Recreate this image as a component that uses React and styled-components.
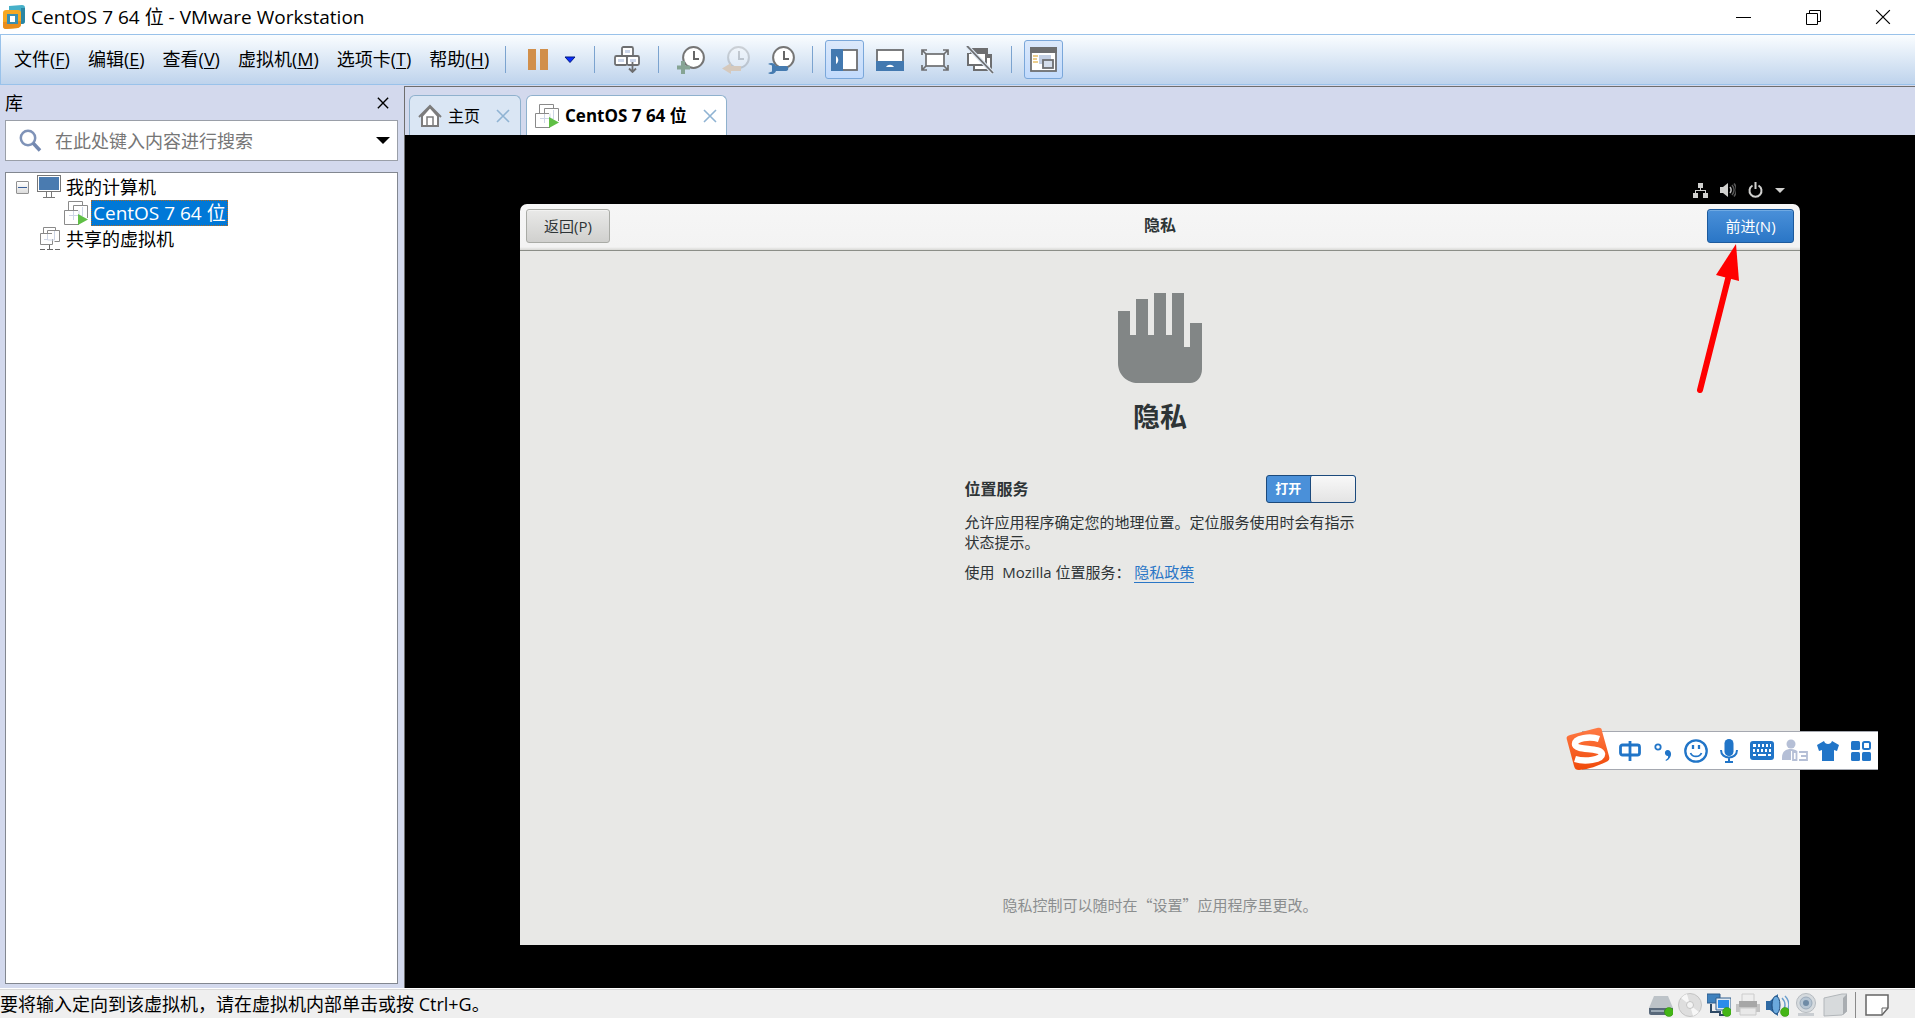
import React, { useState } from "react";
import styled, { createGlobalStyle, css } from "styled-components";

const host = `"Open Sans", "Noto Sans CJK SC", sans-serif`;
const guest = `"Open Sans", "Noto Sans CJK SC", sans-serif`;

const GlobalStyle = createGlobalStyle`
  *, *::before, *::after { box-sizing: border-box; }
  html, body, #root { height: 100%; }
  body { margin: 0; overflow: hidden; font-family: ${host}; font-size: 18px; color: #000; }
  button, input { font: inherit; color: inherit; }
  ul, h1, h2, p { margin: 0; padding: 0; font-weight: inherit; font-size: inherit; }
  svg { display: block; flex: none; }
`;

const plainButton = css`
  display: flex;
  align-items: center;
  justify-content: center;
  padding: 0;
  border: 0;
  background: none;
  white-space: nowrap;
`;

const Page = styled.div`
  display: flex;
  flex-direction: column;
  height: 100vh;
  background: #d3d9ed;
`;

/* ---------- title bar ---------- */
const TitleBar = styled.header`
  display: flex;
  align-items: center;
  flex: none;
  height: 34px;
  padding-left: 3px;
  gap: 6px;
  background: #fff;
`;
const WindowTitle = styled.h1`
  flex: 1;
  font-size: 19px;
  line-height: 34px;
`;
const WindowControls = styled.div`
  display: flex;
  margin-right: -3px;
`;
const WindowButton = styled.button`
  ${plainButton}
  width: 70px;
  height: 34px;
`;

/* ---------- menu and tool bar ---------- */
const Toolbar = styled.div`
  display: flex;
  align-items: center;
  flex: none;
  height: 51px;
  border: 1px solid #99c2ea;
  border-right: 0;
  background: linear-gradient(#fafdff, #bed3ec);
`;
const Menus = styled.nav`
  display: flex;
  gap: 18px;
  width: 504px;
  padding: 0 0 2px 13px;
`;
const MenuButton = styled.button`
  ${plainButton}
  line-height: 26px;
  u { text-underline-offset: 2px; text-decoration-thickness: 1px; }
`;
const Divider = styled.span`
  flex: none;
  width: 1px;
  height: 27px;
  background: #7ba3cf;
`;
const ToolGroup = styled.div`
  display: flex;
  align-items: center;
  gap: ${(p) => p.$gap || 6}px;
  padding: 0 ${(p) => p.$right || 12}px 0 ${(p) => p.$left || 12}px;
`;
const ToolButton = styled.button`
  ${plainButton}
  width: ${(p) => p.$width || 39}px;
  height: 39px;
  border: 1px solid ${(p) => (p.$active ? "#7aa7da" : "transparent")};
  border-radius: 3px;
  background: ${(p) => (p.$active ? "linear-gradient(#dce9fb, #c1dafc)" : "none")};
`;

/* ---------- body ---------- */
const Body = styled.div`
  display: flex;
  flex: 1;
  min-height: 0;
`;
const Sidebar = styled.aside`
  display: flex;
  flex-direction: column;
  flex: none;
  width: 404px;
  padding: 0 6px 4px 5px;
`;
const SidebarHeader = styled.div`
  display: flex;
  align-items: center;
  justify-content: space-between;
  height: 35px;
  padding-right: 9px;
  line-height: 34px;
`;
const SmallButton = styled.button`
  ${plainButton}
  width: ${(p) => p.$size || 12}px;
  height: ${(p) => p.$size || 12}px;
`;
const SearchBox = styled.form`
  display: flex;
  align-items: center;
  height: 41px;
  padding: 0 7px 0 13px;
  gap: 13px;
  border: 1px solid #9a9fa8;
  background: #fff;
`;
const SearchInput = styled.input`
  flex: 1;
  min-width: 0;
  height: 30px;
  padding: 0;
  border: 0;
  outline: 0;
  background: transparent;
  &::placeholder { color: #767676; opacity: 1; }
`;
const Tree = styled.ul`
  flex: 1;
  margin-top: 11px;
  padding: 1px 0;
  border: 1px solid #828790;
  background: #fff;
  list-style: none;
`;
const TreeRow = styled.li`
  display: flex;
  align-items: center;
  height: 26px;
  padding-left: ${(p) => p.$indent}px;
  gap: ${(p) => p.$gap}px;
`;
const TreeLabel = styled.span`
  line-height: 26px;
  ${(p) => p.$selected && css`
    height: 26px;
    padding: 0 1px;
    border: 1px dotted #b36a20;
    background: #0078d7;
    color: #fff;
    font-size: 19px;
    line-height: 24px;
  `}
`;
const Expander = styled.button`
  ${plainButton}
  width: 13px;
  height: 13px;
  margin-right: 3px;
  border: 1px solid #919191;
  border-radius: 1px;
  background: linear-gradient(#fff, #dcdcdc);
`;

const Workspace = styled.main`
  display: flex;
  flex: 1;
  flex-direction: column;
  min-width: 0;
  margin-top: 1px;
  border-top: 1px solid #6e6e6e;
  border-left: 1px solid #6e6e6e;
`;
const Tabs = styled.div`
  display: flex;
  align-items: flex-end;
  flex: none;
  gap: 5px;
  height: 48px;
  padding-left: 4px;
`;
const Tab = styled.div`
  display: flex;
  align-items: center;
  height: 40px;
  padding: 0 ${(p) => (p.$active ? 9 : 10)}px 0 8px;
  border: 1px solid #8fb1cd;
  border-bottom: 0;
  border-radius: 6px 6px 0 0;
  background: ${(p) => (p.$active ? "#fff" : "#dae6f4")};
`;
const TabButton = styled.button`
  ${plainButton}
  gap: 6px;
  margin-right: 16px;
  font-size: ${(p) => (p.$active ? 17 : 16)}px;
  line-height: 24px;
  font-weight: ${(p) => (p.$active ? 700 : 400)};
`;
const Console = styled.div`
  display: flex;
  flex: 1;
  align-items: center;
  justify-content: center;
  padding-bottom: 2px;
  background: #000;
`;

/* ---------- guest desktop ---------- */
const Guest = styled.section`
  position: relative;
  display: flex;
  flex-direction: column;
  width: 1280px;
  max-width: 100%;
  height: 768px;
  font-family: ${guest};
  font-size: 15px;
  color: #2e3436;
`;
const GuestStatus = styled.div`
  display: flex;
  align-items: center;
  justify-content: flex-end;
  gap: 12px;
  height: 27px;
  padding-right: 15px;
`;
const HeaderBar = styled.div`
  display: grid;
  grid-template-columns: 1fr auto 1fr;
  align-items: center;
  height: 47px;
  padding: 0 6px 1px;
  border-bottom: 1px solid #8b8e88;
  border-radius: 7px 7px 0 0;
  background: linear-gradient(#f6f6f6 0, #f3f3f3 43px, #d8d8d5 46px);
`;
const HeaderTitle = styled.h2`
  font-size: 16px;
  font-weight: 700;
  line-height: 24px;
  padding-bottom: 2px;
`;
const PushButton = styled.button`
  ${plainButton}
  justify-self: ${(p) => (p.$primary ? "end" : "start")};
  width: ${(p) => (p.$primary ? 87 : 84)}px;
  height: 34px;
  padding-bottom: 2px;
  border: 1px solid ${(p) => (p.$primary ? "#1c5a9d" : "#a9aba6")};
  border-radius: 3px;
  background: ${(p) => (p.$primary ? "linear-gradient(#4a90d9, #2a76c6)" : "linear-gradient(#e9e9e8, #d0d0ce)")};
  box-shadow: inset 0 1px ${(p) => (p.$primary ? "#6fa9e2" : "#f2f2f1")};
  color: ${(p) => (p.$primary ? "#fff" : "#2e3436")};
`;
const Assistant = styled.div`
  display: flex;
  flex: 1;
  flex-direction: column;
  align-items: center;
  padding: 42px 0 30px;
  background: #e8e8e6;
`;
const PageHeading = styled.h2`
  margin-top: 14px;
  font-size: 27px;
  font-weight: 700;
  line-height: 40px;
`;
const Settings = styled.div`
  display: flex;
  flex-direction: column;
  width: 391px;
  margin-top: 39px;
`;
const SettingRow = styled.div`
  display: flex;
  align-items: center;
  justify-content: space-between;
  height: 27px;
`;
const SettingName = styled.label`
  padding-bottom: 2px;
  font-size: 16px;
  font-weight: 700;
`;
const Switch = styled.span`
  position: relative;
  display: flex;
  width: 90px;
  height: 28px;
  overflow: hidden;
  border: 1px solid #1c4a7c;
  border-radius: 3px;
  background: #4a90d9;
`;
const SwitchInput = styled.input`
  position: absolute;
  inset: 0;
  width: 100%;
  height: 100%;
  margin: 0;
  opacity: 0;
`;
const SwitchText = styled.span`
  flex: 1;
  font-size: 13px;
  font-weight: 700;
  line-height: 25px;
  text-align: center;
  color: #fff;
`;
const SwitchKnob = styled.span`
  flex: 1;
  border-left: 1px solid #1c4a7c;
  border-radius: 2px;
  background: linear-gradient(#f8f8f8, #e4e4e4);
`;
const Paragraph = styled.p`
  margin-top: ${(p) => p.$top}px;
  line-height: 20px;
`;
const PolicyLink = styled.a`
  border-bottom: 1px solid #2a76c6;
  color: #2a76c6;
  text-decoration: none;
`;
const Footnote = styled.p`
  margin-top: auto;
  font-family: "Noto Sans CJK SC", sans-serif;
  line-height: 20px;
  color: #8b8e8f;
`;
const Pointer = styled.svg`
  position: absolute;
  top: 66px;
  right: 58px;
  pointer-events: none;
`;

/* ---------- input method bar ---------- */
const ImeBar = styled.div`
  position: fixed;
  right: 37px;
  bottom: 248px;
  display: flex;
  align-items: center;
  height: 39px;
  padding-right: 1px;
  border: solid #a5a8b0;
  border-width: 1px 0;
  background: #fff;
`;
const ImeLogo = styled.span`
  margin: 0 2px 3px -17px;
`;
const ImeButton = styled.button`
  ${plainButton}
  width: 33px;
  height: 37px;
`;

/* ---------- status bar ---------- */
const StatusBar = styled.footer`
  display: flex;
  align-items: center;
  justify-content: space-between;
  flex: none;
  height: 30px;
  padding: 2px 26px 0 0;
  border-top: 1px solid #fff;
  background: #efefef;
  box-shadow: inset 0 1px #d9d9d9;
`;
const StatusText = styled.span`
  line-height: 27px;
`;
const Devices = styled.div`
  display: flex;
  align-items: center;
  gap: 5px;
  padding-top: 1px;
`;
const DeviceButton = styled.button`
  ${plainButton}
  width: 24px;
  height: 24px;
`;
const DeviceDivider = styled.span`
  width: 1px;
  height: 26px;
  margin: 0 4px 0 3px;
  background: #8a8a8a;
`;

/* ---------- drawings ---------- */
const AppLogo = () => (
  <svg width="22" height="24" viewBox="0 0 22 24">
    <path d="M6 1 19 0c2 0 3 1 3 3v13c0 2-1 3-3 3H6Z" fill="#46b0c9" />
    <path d="M18 3h4v13c0 2-1 3-3 3h-1Z" fill="#2b86a4" />
    <path d="M3 5h12c2 0 3 1 3 3v11c0 2-1 3-3 4L3 24c-2 0-3-1-3-3V8c0-2 1-3 3-3Z" fill="#f6a821" />
    <path d="M0 17v4c0 2 1 3 3 3l12-1c2-1 3-2 3-4v-3Z" fill="#ea8d1b" />
    <path d="M4 9h11v10H4Z" fill="#3a8fb0" />
    <path d="M7 11h5v6H7Z" fill="#fff" />
  </svg>
);

const Cross = ({ size = 12, color = "#000", weight = 1.6 }) => (
  <svg width={size} height={size} viewBox="0 0 14 14" fill="none" stroke={color} strokeWidth={weight}>
    <path d="m1 1 12 12M13 1 1 13" />
  </svg>
);

const PauseIcon = () => (
  <svg width="20" height="21" viewBox="0 0 20 21" fill="#d18f4b">
    <path d="M0 0h8v21H0zM12 0h8v21h-8z" />
  </svg>
);
const BlueCaret = () => (
  <svg width="12" height="8" viewBox="0 0 12 8">
    <path d="M1 1h10L6 6.500Z" fill="#0a2cff" stroke="#001a80" />
  </svg>
);
const SendKeysIcon = () => (
  <svg width="26" height="27" viewBox="0 0 26 27" fill="#fff" stroke="#6d6e70" strokeWidth="1.800">
    <rect x="8" y="1" width="11" height="9" rx="1.500" />
    <rect x="1" y="10" width="12" height="9" rx="1.500" />
    <rect x="13" y="10" width="12" height="9" rx="1.500" />
    <path d="M11 4h5v3h-5zM4 13h6v3H4zM16 13h6v3h-6z" fill="#ccd6ea" stroke="none" />
    <path d="M18.500 16v9M15 22.500l3.500 3.500 3.500-3.500" fill="none" />
  </svg>
);
const Clock = ({ opacity = 1 }) => (
  <g opacity={opacity}>
    <circle cx="16.500" cy="11.500" r="10.400" fill="#fff" stroke="#757575" strokeWidth="2" />
    <path d="M17 5v8h5" fill="none" stroke="#666" strokeWidth="2" />
  </g>
);
const SnapshotIcon = () => (
  <svg width="28" height="28" viewBox="0 0 28 28">
    <Clock />
    <path d="M4 15h4v4.500h5v4H8V28H4v-4.500H0v-4h4Z" fill="#86a494" />
  </svg>
);
const RevertIcon = () => (
  <svg width="28" height="28" viewBox="0 0 28 28">
    <Clock opacity={0.27} />
    <path d="M0 22.500 9 17v3h10v5H9v3Z" fill="#d5c9bd" />
  </svg>
);
const ManageIcon = () => (
  <svg width="28" height="28" viewBox="0 0 28 28">
    <Clock />
    <path d="M1 18c3-2 7-1 8 2h10c3 0 3 5 0 5H9c-1 3-5 4-8 2l4-1.500v-6Z" fill="#457bb0" />
  </svg>
);
const LibraryIcon = () => (
  <svg width="27" height="22" viewBox="0 0 27 22">
    <rect x="1" y="1" width="25" height="20" fill="#fff" stroke="#6d6e70" strokeWidth="1.800" />
    <path d="M0 0h12v22H0z" fill="#4379b0" />
    <path d="M5 7c3 2 3 6 0 8Z" fill="#fff" />
  </svg>
);
const ThumbnailIcon = () => (
  <svg width="28" height="22" viewBox="0 0 28 22">
    <rect x="1" y="1" width="26" height="20" fill="#fff" stroke="#6d6e70" strokeWidth="1.800" />
    <path d="M0 12h28v10H0z" fill="#4379b0" />
    <path d="M10 18c2-3 6-3 8 0Z" fill="#fff" />
  </svg>
);
const FullscreenIcon = () => (
  <svg width="28" height="22" viewBox="0 0 28 22" fill="none" stroke="#6d6e70" strokeWidth="1.700">
    <rect x="5" y="5" width="18" height="12" fill="#fff" />
    <path d="M5 5 1 1m0 5V1h5M23 5l4-4m-5 0h5v5M5 17l-4 4m0-5v5h5M23 17l4 4m0-5v5h-5" />
  </svg>
);
const UnityIcon = () => (
  <svg width="28" height="28" viewBox="0 0 28 28">
    <path d="M4 2h18v6h4v17H7v-5H1V7h3Z" fill="#6d6e70" />
    <path d="M3 8h16v10H3Z" fill="#fff" />
    <path d="M9 20h12v-8h3v11H9Z" fill="#fff" />
    <path d="m1 0 26 27" stroke="#dce6f2" strokeWidth="4" />
    <path d="m1 0 26 27" stroke="#6d6e70" strokeWidth="1.800" />
  </svg>
);
const ConsoleIcon = () => (
  <svg width="27" height="25" viewBox="0 0 27 25">
    <rect x="1" y="1" width="25" height="23" fill="#fff" stroke="#6d6e70" strokeWidth="1.800" />
    <path d="M0 0h27v6H0z" fill="#6d6e70" />
    <path d="M3 9h5M3 12h4M3 15h5" stroke="#e5bd68" strokeWidth="1.600" />
    <path d="M9 8h12v9H9z" fill="#c3cfe3" />
    <rect x="13" y="13" width="10" height="8" fill="#d5deec" stroke="#6d6e70" strokeWidth="1.800" />
  </svg>
);
const SearchIcon = () => (
  <svg width="23" height="23" viewBox="0 0 23 23" fill="none">
    <circle cx="9" cy="9" r="7.200" stroke="#7f93b8" strokeWidth="2.500" />
    <path d="m14 14 7 7.500" stroke="#7388b0" strokeWidth="3.500" />
  </svg>
);
const MonitorIcon = () => (
  <svg width="24" height="24" viewBox="0 0 24 24" fill="none" stroke="#777">
    <rect x="0.500" y="0.500" width="23" height="16" fill="#fff" />
    <path d="M2 2h20v13H2z" fill="#4a7bb0" stroke="none" />
    <path d="M9.500 17v5.500M14.500 17v5.500M6 22.500h12" />
  </svg>
);
const MachineIcon = () => (
  <svg width="24" height="24" viewBox="0 0 24 24" fill="none" stroke="#8a8a8a">
    <path d="M4.500 9V.5h14v4M9.500 9V4.500h14V17M14 9.500H.5v14H15" />
    <path d="M9.500 10v9M5 14.500h10v-5M18.500 6v9H14" stroke="#cdd5e6" />
    <path d="M14 13v11l10-5.500Z" fill="#5fbf45" stroke="none" />
  </svg>
);
const SharedIcon = () => (
  <svg width="20" height="24" viewBox="0 0 20 24" fill="none" stroke="#8a8a8a">
    <path d="M3.500 6V.5h12v3M7.500 6V3.500h12v11h-5M12 6.500H.5v11h12V12" />
    <path d="M7.500 7v6h7V4M4 12.500h4" stroke="#cdd5e6" />
    <path d="M9.500 18v4M0 22.500h5M7 22.500h6M15 22.500h5" stroke="#666" />
  </svg>
);
const HomeIcon = () => (
  <svg width="24" height="23" viewBox="0 0 24 23" fill="none" stroke="#7c7c7c" strokeWidth="2">
    <path d="M4 12v10h16V12L12 3Z" fill="#fff" />
    <path d="M1 13 12 2l11 11" />
    <path d="M9 22v-9h6v9" strokeWidth="1.500" />
  </svg>
);
const HandIcon = () => (
  <svg width="84" height="90" viewBox="0 0 84 90">
    <path d="M0 18h12v24h6V6h12v36h6V0h12v42h6V0h12v54h6V30h12v46c0 8-5 14-12 14H20C9 90 0 82 0 70Z" fill="#828686" />
  </svg>
);
const NetworkIcon = () => (
  <svg width="15" height="15" viewBox="0 0 15 15" fill="#d0d0ce">
    <path d="M5 0h5v5H5zM0 10h5v5H0zM10 10h5v5h-5zM7 5h1v2h5v3h-1V8H3v2H2V7h5Z" />
  </svg>
);
const VolumeIcon = () => (
  <svg width="16" height="14" viewBox="0 0 16 14" fill="none">
    <path d="M0 4h3l5-4v14l-5-4H0Z" fill="#d0d0ce" />
    <path d="M10 4c1.500 2 1.500 4 0 6" stroke="#bbb" strokeWidth="1.500" />
    <path d="M12 2c2.500 3 2.500 7 0 10M14 .5c3 4 3 9 0 13" stroke="#555" strokeWidth="1.500" />
  </svg>
);
const PowerIcon = () => (
  <svg width="15" height="16" viewBox="0 0 15 16" fill="none" stroke="#d0d0ce" strokeWidth="2">
    <path d="M4.500 3.500a6 6 0 1 0 6 0M7.500 0v7" />
  </svg>
);
const Caret = ({ width = 10, height = 5, color = "#d0d0ce" }) => (
  <svg width={width} height={height} viewBox="0 0 10 5"><path d="M0 0h10L5 5Z" fill={color} /></svg>
);

const SogouLogo = () => (
  <svg width="46" height="44" viewBox="0 0 46 44">
    <defs>
      <linearGradient id="sogou" x2="0" y2="1">
        <stop stopColor="#ff7a45" />
        <stop offset="1" stopColor="#f04a0a" />
      </linearGradient>
    </defs>
    <path d="M5 8 32 1c3-1 5 0 5 3l7 25c1 3 0 5-3 6-9 4-16 7-27 8-3 0-4-1-5-4L2 13c-1-3 0-4 3-5Z" fill="url(#sogou)" />
    <path d="M34 12c-9-3-24-1-24 5 0 7 26 3 27 10 0 6-17 8-27 5" fill="none" stroke="#fff" strokeWidth="6.500" />
  </svg>
);
const imeIcons = [
  ["中文输入", <svg width="22" height="22" viewBox="0 0 22 22" fill="none" stroke="#2175c8" strokeWidth="2.800"><rect x="1.500" y="5" width="19" height="10" rx="2" /><path d="M11 1v20" /></svg>],
  ["中文标点", <svg width="18" height="20" viewBox="0 0 18 20"><circle cx="4" cy="6" r="2.700" fill="none" stroke="#2175c8" strokeWidth="1.800" /><path d="M13.500 9c5 0 5 8-1.500 11l-.5-1c2-1 3-2.500 2.500-4-4 0-4-6-.5-6Z" fill="#2175c8" /></svg>],
  ["表情", <svg width="24" height="24" viewBox="0 0 24 24" fill="none" stroke="#2175c8" strokeWidth="2.300"><circle cx="12" cy="12" r="10.700" /><path d="M9 6v4M15 6v4" /><path d="M6.500 14c2 4.500 9 4.500 11 0" strokeWidth="1.800" /></svg>],
  ["语音", <svg width="18" height="24" viewBox="0 0 18 24"><rect x="4.500" y="0" width="9" height="17" rx="4.500" fill="#2175c8" /><path d="M1 11c0 10 16 10 16 0M9 18v5M5 23h8" fill="none" stroke="#2175c8" strokeWidth="2" /></svg>],
  ["软键盘", <svg width="24" height="19" viewBox="0 0 24 19"><rect width="24" height="19" rx="3" fill="#2175c8" /><g fill="#fff"><path d="M3 3h3v3H3zM8 3h2v3H8zM12 3h2v3h-2zM16 3h2v3h-2zM20 3h1v3h-1zM3 8h2v3H3zM7 8h2v3H7zM11 8h2v3h-2zM15 8h2v3h-2zM19 8h2v3h-2zM3 13h3v2H3zM8 13h8v2H8zM18 13h3v2h-3z" /></g></svg>],
  ["账户", <svg width="26" height="23" viewBox="0 0 26 23"><circle cx="9" cy="5" r="4.500" fill="#b5bfd6" /><path d="M0 19c0-7 4-9 9-9 3 0 5 1 6 2H9v9H0Z" fill="#b5bfd6" /><path d="M10 12h16v10H10z" fill="#fff" /><path d="M11 13h3.500v8H11zM17 13h8v8h-8M19 17h6" fill="none" stroke="#b5bfd6" strokeWidth="1.800" /></svg>],
  ["皮肤", <svg width="22" height="20" viewBox="0 0 22 20"><path d="m7 0-7 4 2 6 3-1v11h12V9l3 1 2-6-7-4c-1 4-7 4-8 0Z" fill="#2175c8" /></svg>],
  ["工具箱", <svg width="20" height="20" viewBox="0 0 20 20" fill="#2175c8"><rect width="9" height="9" rx="1.500" /><rect y="11" width="9" height="9" rx="1.500" /><rect x="11" y="11" width="9" height="9" rx="1.500" /><rect x="12" y="1" width="7" height="7" rx="1.500" fill="none" stroke="#2175c8" strokeWidth="2" /></svg>],
];

const GreenDot = () => <circle cx="20" cy="19" r="4.500" fill="#44b516" stroke="#2f8f0c" strokeWidth="0.500" />;
const DeviceSvg = ({ children }) => <svg width="24" height="24" viewBox="0 0 24 24">{children}</svg>;
const deviceIcons = [
  ["硬盘", <><path d="M5 3h14l5 12H0Z" fill="#bdc3c8" /><path d="M0 15h24v5c0 1-1 2-2 2H2c-1 0-2-1-2-2Z" fill="#59697b" /><path d="M2 17h13v2H2z" fill="#9ba9b5" /><GreenDot /></>],
  ["光驱", <><circle cx="12" cy="12" r="11.500" fill="#dedede" stroke="#c4c4c4" /><path d="M12 12 3 5a12 12 0 0 1 6-4ZM12 12l9 7a12 12 0 0 1-6 4Z" fill="#f7f7f7" /><circle cx="12" cy="12" r="3.500" fill="#f4f4f4" stroke="#c4c4c4" /></>],
  ["网络适配器", <><path d="M0 1h13v9H0z" fill="#3f81bd" stroke="#315f8d" /><path d="M9 5h15v12H9z" fill="#dfe9f2" stroke="#315f8d" /><path d="M11 7h11v8H11z" fill="#2a8cea" /><path d="M4 11v8h9v3h8" fill="none" stroke="#2e4a66" strokeWidth="2" /><GreenDot /></>],
  ["打印机", <><path d="M6 1h12v9H6z" fill="#eee" stroke="#ccc" /><path d="M0 11h24v8H0z" fill="#c3c3c3" /><path d="M3 8h18v6H3z" fill="#a7a7a7" /><path d="M4 15h16v7H4z" fill="#e9e9e9" stroke="#c9c9c9" /></>],
  ["声卡", <><path d="M1 8h4l8-7v22l-8-6H1Z" fill="#2e69a3" /><ellipse cx="11" cy="12" rx="4" ry="9" fill="#6ba9dd" stroke="#1d4b7c" /><path d="M17 5c4 4 4 10 0 14M20 3c5 5 5 12 1 17" fill="none" stroke="#6b9fce" strokeWidth="1.500" /><GreenDot /></>],
  ["摄像头", <><circle cx="12" cy="10" r="9.500" fill="#d5dade" stroke="#b6bbc0" /><circle cx="12" cy="10" r="6" fill="#b6c5d3" stroke="#9babbb" /><circle cx="12" cy="10" r="3" fill="#6f8ba6" /><path d="M4 20h16v3H4z" fill="#c9cdd1" /></>],
  ["共享文件夹", <><path d="M1 5 19 1h5v17l-5 4L1 23Z" fill="#d7dadc" stroke="#b2b6ba" /><path d="M20 5v17l4-4V1Z" fill="#a9adb1" /></>],
];

const menus = [["文件", "F"], ["编辑", "E"], ["查看", "V"], ["虚拟机", "M"], ["选项卡", "T"], ["帮助", "H"]];

export default function App() {
  const [located, setLocated] = useState(true);
  const [query, setQuery] = useState("");

  return (
    <Page>
      <GlobalStyle />
      <TitleBar>
        <AppLogo />
        <WindowTitle>CentOS 7 64 位 - VMware Workstation</WindowTitle>
        <WindowControls>
          <WindowButton aria-label="最小化">
            <svg width="15" height="15" viewBox="0 0 15 15"><path d="M0 7.500h15" stroke="#000" /></svg>
          </WindowButton>
          <WindowButton aria-label="向下还原">
            <svg width="15" height="15" viewBox="0 0 15 15" fill="none" stroke="#000"><path d="M.5 3.500h11v11H.5zM3.500 3V.5h11v11H12" /></svg>
          </WindowButton>
          <WindowButton aria-label="关闭"><Cross size={16} weight={1.1} /></WindowButton>
        </WindowControls>
      </TitleBar>

      <Toolbar>
        <Menus>
          {menus.map(([name, key]) => (
            <MenuButton key={key}><span>{name}(<u>{key}</u>)</span></MenuButton>
          ))}
        </Menus>
        <Divider />
        <ToolGroup $gap={4} $right={15}>
          <ToolButton aria-label="挂起"><PauseIcon /></ToolButton>
          <ToolButton aria-label="电源选项" $width={18}><BlueCaret /></ToolButton>
        </ToolGroup>
        <Divider />
        <ToolGroup>
          <ToolButton aria-label="发送 Ctrl+Alt+Del"><SendKeysIcon /></ToolButton>
        </ToolGroup>
        <Divider />
        <ToolGroup>
          <ToolButton aria-label="拍摄快照"><SnapshotIcon /></ToolButton>
          <ToolButton aria-label="恢复快照"><RevertIcon /></ToolButton>
          <ToolButton aria-label="管理快照"><ManageIcon /></ToolButton>
        </ToolGroup>
        <Divider />
        <ToolGroup>
          <ToolButton aria-label="显示库" $active><LibraryIcon /></ToolButton>
          <ToolButton aria-label="缩略图栏"><ThumbnailIcon /></ToolButton>
          <ToolButton aria-label="全屏"><FullscreenIcon /></ToolButton>
          <ToolButton aria-label="Unity"><UnityIcon /></ToolButton>
        </ToolGroup>
        <Divider />
        <ToolGroup>
          <ToolButton aria-label="控制台视图" $active><ConsoleIcon /></ToolButton>
        </ToolGroup>
      </Toolbar>

      <Body>
        <Sidebar>
          <SidebarHeader>
            <h2>库</h2>
            <SmallButton aria-label="关闭库"><Cross size={12} /></SmallButton>
          </SidebarHeader>
          <SearchBox onSubmit={(e) => e.preventDefault()}>
            <SearchIcon />
            <SearchInput aria-label="搜索" placeholder="在此处键入内容进行搜索" value={query} onChange={(e) => setQuery(e.target.value)} />
            <SmallButton type="button" aria-label="搜索选项" $size={14}><Caret width={14} height={7} color="#000" /></SmallButton>
          </SearchBox>
          <Tree>
            <TreeRow $indent={10} $gap={5}>
              <Expander aria-label="折叠"><svg width="9" height="1" viewBox="0 0 9 1"><path d="M0 0h9v1H0z" fill="#3a5f9a" /></svg></Expander>
              <MonitorIcon />
              <TreeLabel>我的计算机</TreeLabel>
            </TreeRow>
            <TreeRow $indent={58} $gap={3}>
              <MachineIcon />
              <TreeLabel $selected>CentOS 7 64 位</TreeLabel>
            </TreeRow>
            <TreeRow $indent={34} $gap={6}>
              <SharedIcon />
              <TreeLabel>共享的虚拟机</TreeLabel>
            </TreeRow>
          </Tree>
        </Sidebar>

        <Workspace>
          <Tabs>
            <Tab>
              <TabButton><HomeIcon />主页</TabButton>
              <SmallButton aria-label="关闭主页" $size={14}><Cross size={14} color="#8fb3d3" /></SmallButton>
            </Tab>
            <Tab $active>
              <TabButton $active><MachineIcon />CentOS 7 64 位</TabButton>
              <SmallButton aria-label="关闭 CentOS 7 64 位" $size={14}><Cross size={14} color="#8fb3d3" /></SmallButton>
            </Tab>
          </Tabs>
          <Console>
            <Guest>
              <GuestStatus>
                <NetworkIcon />
                <VolumeIcon />
                <PowerIcon />
                <Caret />
              </GuestStatus>
              <HeaderBar>
                <PushButton>返回(P)</PushButton>
                <HeaderTitle>隐私</HeaderTitle>
                <PushButton $primary>前进(N)</PushButton>
              </HeaderBar>
              <Assistant>
                <HandIcon />
                <PageHeading>隐私</PageHeading>
                <Settings>
                  <SettingRow>
                    <SettingName htmlFor="location">位置服务</SettingName>
                    <Switch>
                      <SwitchText>打开</SwitchText>
                      <SwitchKnob />
                      <SwitchInput id="location" type="checkbox" role="switch" checked={located} onChange={(e) => setLocated(e.target.checked)} />
                    </Switch>
                  </SettingRow>
                  <Paragraph $top={9}>允许应用程序确定您的地理位置。定位服务使用时会有指示状态提示。</Paragraph>
                  <Paragraph $top={10}>使用&nbsp; Mozilla 位置服务：&nbsp;<PolicyLink href="#policy">隐私政策</PolicyLink></Paragraph>
                </Settings>
                <Footnote>隐私控制可以随时在“设置”应用程序里更改。</Footnote>
              </Assistant>
              <Pointer width="46" height="152" viewBox="0 0 46 152">
                <path d="M4 147 34 28" stroke="#f00" strokeWidth="6" strokeLinecap="round" />
                <path d="m40 1 3 37-23-6Z" fill="#f00" />
              </Pointer>
            </Guest>
          </Console>
        </Workspace>
      </Body>

      <StatusBar>
        <StatusText>要将输入定向到该虚拟机，请在虚拟机内部单击或按 Ctrl+G。</StatusText>
        <Devices>
          {deviceIcons.map(([name, art]) => (
            <DeviceButton key={name} aria-label={name}><DeviceSvg>{art}</DeviceSvg></DeviceButton>
          ))}
          <DeviceDivider />
          <DeviceButton aria-label="消息日志">
            <DeviceSvg><path d="M1 2h22v13l-6 7H1Z" fill="#fff" stroke="#666" strokeWidth="1.500" /><path d="M23 15h-6v7" fill="none" stroke="#666" /></DeviceSvg>
          </DeviceButton>
        </Devices>
      </StatusBar>

      <ImeBar>
        <ImeLogo><SogouLogo /></ImeLogo>
        {imeIcons.map(([name, art]) => <ImeButton key={name} aria-label={name}>{art}</ImeButton>)}
      </ImeBar>
    </Page>
  );
}
